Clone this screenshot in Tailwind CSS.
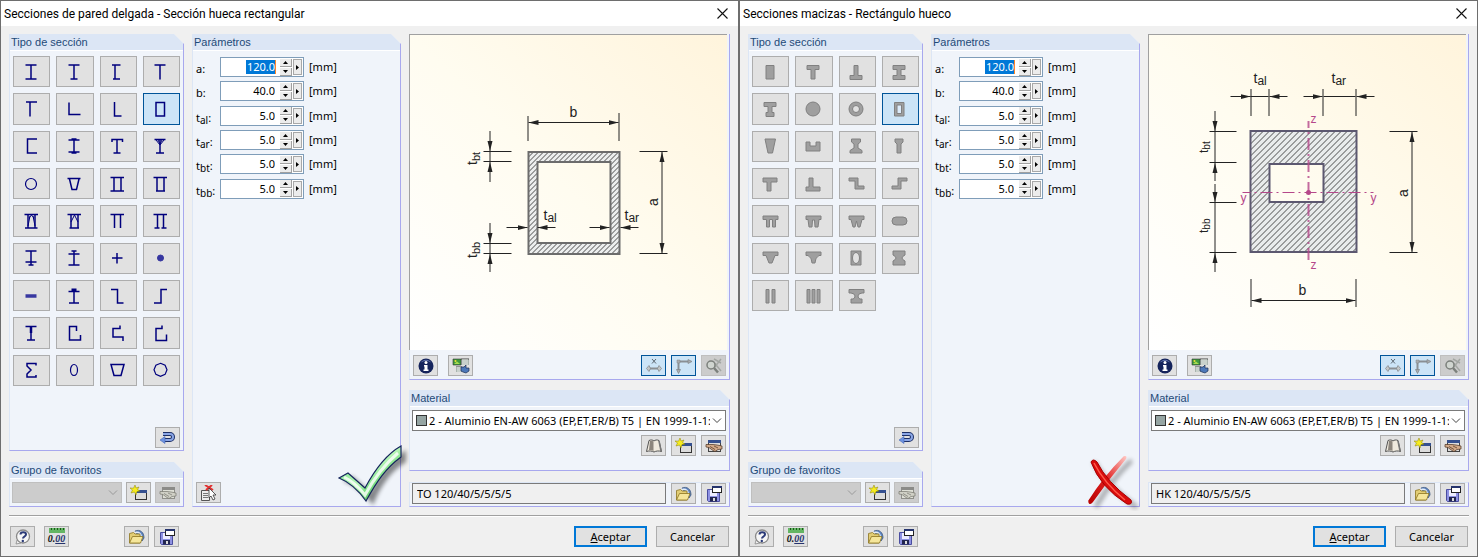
<!DOCTYPE html>
<html lang="es">
<head>
  <meta charset="UTF-8" />
  <meta name="viewport" content="width=device-width, initial-scale=1" />
  <title>Secciones</title>
  <script src="https://cdn.jsdelivr.net/npm/@tailwindcss/browser@4"></script>
</head>
<body class="bg-[#f0f0f0] font-['Noto_Sans',sans-serif] text-[11px] leading-4 text-black">

  <!-- Shared toolbar icons -->
  <svg class="absolute size-0" aria-hidden="true">
    <defs>
      <pattern id="hatch5" width="5" height="5" patternUnits="userSpaceOnUse">
        <rect width="5" height="5" fill="#eceeee" />
        <path d="M-1 1l2-2M0 5l5-5M4 6l2-2" stroke="#222" stroke-width="0.800" />
      </pattern>
      <pattern id="hatch6" width="6" height="6" patternUnits="userSpaceOnUse">
        <rect width="6" height="6" fill="#e9ecec" />
        <path d="M-1 1l2-2M0 6l6-6M5 7l2-2" stroke="#222" stroke-width="0.800" />
      </pattern>
      <linearGradient id="tick" x1="0" y1="0" x2="1" y2="1">
        <stop offset="0" stop-color="#5fe07a" />
        <stop offset="0.5" stop-color="#b8f7b8" />
        <stop offset="0.62" stop-color="#7be083" />
        <stop offset="1" stop-color="#1d7a2c" />
      </linearGradient>
      <linearGradient id="cross" x1="0" y1="1" x2="1" y2="0">
        <stop offset="0" stop-color="#b80000" />
        <stop offset="0.5" stop-color="#e02020" />
        <stop offset="1" stop-color="#ffc4c0" />
      </linearGradient>
      <filter id="soft" x="-20%" y="-20%" width="150%" height="150%">
        <feGaussianBlur stdDeviation="2" />
      </filter>
      <marker id="arrow" viewBox="0 0 10 6" refX="10" refY="3" markerWidth="10" markerHeight="6" markerUnits="userSpaceOnUse" orient="auto-start-reverse">
        <path d="M0 0.500L10 3L0 5.500z" fill="#222" />
      </marker>
    </defs>
    <symbol id="i-undo" viewBox="0 0 18 16">
      <path d="M4 4h7a2.500 2.500 0 010 6H4" fill="none" stroke="#1c2f66" stroke-width="4" />
      <path d="M4 4h7a2.500 2.500 0 010 6H4" fill="none" stroke="#8aa6e6" stroke-width="2" />
      <path d="M1 10l5-3.500v7z" fill="#6d92e0" stroke="#4468b8" stroke-width="0.600" />
    </symbol>
    <symbol id="i-new" viewBox="0 0 18 16">
      <rect x="5.500" y="5.500" width="11" height="9" fill="#dcdcdc" stroke="#333" />
      <path d="M5 5h12v3H5z" fill="#35508f" />
      <path d="M5 0l1 3 3-1-1.500 2.500L10 6l-3 .5L6 10l-1.500-3L1 8l1.500-3L0 3l3.500.2z" fill="#f6ec1e" stroke="#8a8200" stroke-width="0.500" />
    </symbol>
    <symbol id="i-edit" viewBox="0 0 18 16">
      <rect x="3.500" y="2.500" width="12" height="11" fill="#dcdcdc" stroke="#444" />
      <path d="M3 2h13v3H3z" fill="#35508f" />
      <path d="M1 6.500h7l4 .5 5 1v3l-4 .5-3 2-2-1-4-3-3-.5z" fill="#d2a988" stroke="#4a3020" stroke-width="0.700" />
      <path d="M5 8.500l5 3M9 8l4 2" stroke="#4a3020" stroke-width="0.700" />
    </symbol>
    <symbol id="i-edit-off" viewBox="0 0 18 16">
      <rect x="3.500" y="2.500" width="12" height="11" fill="#dedfd6" stroke="#8f8f8a" />
      <path d="M3 2h13v3H3z" fill="#8b8b88" />
      <path d="M1 6.500h7l4 .5 5 1v3l-4 .5-3 2-2-1-4-3-3-.5z" fill="#d0d0c6" stroke="#77776e" stroke-width="0.700" />
      <path d="M5 8.500l5 3M9 8l4 2" stroke="#77776e" stroke-width="0.700" />
    </symbol>
    <symbol id="i-help" viewBox="0 0 18 16">
      <path d="M3 11l-1 4 5-1z" fill="#eee" stroke="#8a8a8a" stroke-width="0.800" />
      <circle cx="9" cy="7.500" r="6.500" fill="#f6f6f6" stroke="#8a8a8a" stroke-width="1.300" />
      <path d="M6.500 5.500c0-3 5.500-3 5.500 0 0 2-3 2-3 4" fill="none" stroke="#2b3a78" stroke-width="2" />
      <circle cx="8.800" cy="12" r="1.200" fill="#2b3a78" />
    </symbol>
    <symbol id="i-open" viewBox="0 0 18 16">
      <path d="M7 2c5-2 9 1 9 7l-2 3z" fill="#5f86c0" stroke="#3a5680" stroke-width="0.800" />
      <path d="M7 3.500c4-1 6.500 1 6.500 6" fill="none" stroke="#e6eefa" stroke-width="1.500" />
      <path d="M1.500 14V4.500l4-1 1.500 1.500h5V14z" fill="#e2cd75" stroke="#8b7420" stroke-width="0.800" />
      <path d="M1.500 14l3-6.500H15L12.500 14z" fill="#f5e69a" stroke="#8b7420" stroke-width="0.800" />
    </symbol>
    <symbol id="i-save" viewBox="0 0 18 16">
      <path d="M2.500 3.500h12v12h-11l-1-1z" fill="#8f92e2" stroke="#4a4da0" />
      <path d="M5 4h7v6H5z" fill="#eef" />
      <path d="M5 11h7v4.500H5z" fill="#222650" />
      <path d="M8 12h2v3H8z" fill="#ddd" />
      <rect x="7.500" y="0.500" width="9" height="6" fill="#fff" stroke="#222" />
      <path d="M7 0h10v2H7z" fill="#26346e" />
    </symbol>
    <symbol id="i-info" viewBox="0 0 18 16">
      <circle cx="9" cy="8" r="7.500" fill="#15245c" />
      <path d="M4 4.500a6 6 0 0110 0 9 9 0 00-10 0z" fill="#6577b0" />
      <circle cx="9" cy="4.500" r="1.500" fill="#fff" />
      <path d="M7 7h3.500v4.500h1V13H6.500v-1.500h1V8.500H7z" fill="#fff" />
    </symbol>
    <symbol id="i-image" viewBox="0 0 18 16">
      <path d="M1 1h16v6H1z" fill="#a9b4ae" />
      <path d="M1 1h8v6H1z" fill="#3f9a3f" stroke="#333" stroke-width="0.600" />
      <path d="M2 6l3-2.500L8 6z" fill="#a6dc50" />
      <circle cx="3.500" cy="3" r="1" fill="#f2e030" />
      <path d="M9 1h8M4 9h6" stroke="#444" />
      <path d="M4 9h6v5H4z" fill="#a9b4ae" />
      <path d="M11 1v6M13 1v6M15 1v6M6 9v5M8 9v5" stroke="#e9eeea" />
      <path d="M9 9h3l2-2v3h3v3l-3 2-3-1-2-1z" fill="#4d78b8" stroke="#1c2f55" stroke-width="0.700" />
    </symbol>
    <symbol id="i-dimx" viewBox="0 0 18 16">
      <path d="M7 1l4 4.500M11 1L7 5.500" stroke="#5c6670" stroke-width="1" />
      <path d="M3 10.500h12" stroke="#8b8f93" stroke-width="2" />
      <path d="M1.500 10.500l2.500-3 1.500 3-1.500 3zM16.500 10.500l-2.500-3-1.500 3 1.500 3z" fill="#c2c6c8" stroke="#808488" stroke-width="0.700" />
    </symbol>
    <symbol id="i-axes" viewBox="0 0 18 16">
      <path d="M3.500 13V3.500h11" fill="none" stroke="#8a8f94" stroke-width="2" />
      <path d="M2 2h3v3H2z" fill="#a9adb0" stroke="#808488" stroke-width="0.500" />
      <path d="M17 3.500l-4-2v4zM3.500 15.500l-2-4h4z" fill="#a9adb0" stroke="#808488" stroke-width="0.700" />
    </symbol>
    <symbol id="i-zoomoff" viewBox="0 0 18 16">
      <path d="M8 3l8 10M16 1L9 10M9 1l7 4" stroke="#a3a7a3" stroke-width="1.500" />
      <circle cx="6" cy="7" r="4" fill="#d0d5d0" stroke="#7c807c" stroke-width="1.500" />
      <path d="M9 10l4 4.500" stroke="#7c807c" stroke-width="2.500" />
    </symbol>
    <symbol id="i-book" viewBox="0 0 18 16">
      <path d="M1.500 13.500L4 2.500c2-1 4-.5 5 .5 1-1 3-1.500 5-.5l2.500 11c-3-1-5.500-.5-7.500.5-2-1-4.500-1.500-7.500-.5z" fill="#efe9dd" stroke="#444" stroke-width="0.900" />
      <path d="M5 3l-1 9c2 0 3 .3 4.500 1V3.500C7.500 2.800 6 2.500 5 3z" fill="#8c857c" />
      <path d="M14 3l2 10" stroke="#777" stroke-width="1.500" />
    </symbol>
    <symbol id="i-pick" viewBox="0 0 18 16">
      <path d="M1.500 5.500h8v10h-8z" fill="#eee" stroke="#555" />
      <path d="M3 8.500h5M3 10.500h5M3 12.500h5" stroke="#777" />
      <path d="M5 0l8 5M12 0L6 5" stroke="#e03030" stroke-width="2" />
      <path d="M9 3v10l2-2 2 4 2-1-2-4h3z" fill="#fff" stroke="#333" stroke-width="0.800" />
    </symbol>
  </svg>

  <main id="dialogs" class="flex"></main>

  <script>
    // Section glyphs, all on an 18x18 grid
    const thinIcons = [
      '<path d="M3.500 2h11M3.500 16h11M9 2v14"/>',
      '<path d="M3.500 2h11M5.500 16h7M9 2v14"/>',
      '<path d="M4 2h8.500M5 16h7M7 2v14"/>',
      '<path d="M3.500 2h11M9 2v14.500"/>',
      '<path d="M4 2h11M8 2v14.500"/>',
      '<path d="M4 2.500V14.500h11.500"/>',
      '<path d="M6.500 2v14h7"/>',
      '<path d="M5 2.500h8.500v13.500H5z"/>',
      '<path d="M15 2H5.500v14H15"/>',
      '<path d="M3.500 3h11M3.500 15h11M9 2v14M6.500 2h5M6.500 16h5"/>',
      '<path d="M4 5V2.500h10.500V5M9 2v14M5.500 16h7"/>',
      '<path d="M3.500 2.500h11M9 2v14M5 16h8"/><path d="M5 3l4 5 4-5M7 3l2 4 2-4" stroke-width="1"/>',
      '<circle cx="9" cy="9" r="5.500" stroke-width="1.200"/>',
      '<path d="M2.500 3.500h13M4.500 4l2.500 10.500h4.500L14 4"/>',
      '<path d="M2.500 2.500h13.500M2.500 16h13.500M6 2v14M13 2v14"/>',
      '<path d="M2.500 2.500h13.500M5 16h9M6 2v14M13 2v14"/>',
      '<path d="M2.500 2.500h13.500M3 16h12.500M6 2v14M13 2v14"/><path d="M6 14l2-10M13 14L11 4M7 6l2.500-3L12 6" stroke-width="1"/>',
      '<path d="M2.500 2.500h13.500M4.500 16h9.500M6 2v14M13 2v14"/><path d="M6 10l3.500-7L13 10" stroke-width="1"/>',
      '<path d="M2.500 2.500h13.500M6.500 2v14M12.500 2v14"/>',
      '<path d="M2.500 2.500h13.500M6.500 2v14M12.500 2v14M3.500 16h5M10.500 16h5"/>',
      '<path d="M3.500 2h11M3.500 13h11M9 2v14M6.500 16h5"/>',
      '<path d="M3.500 5h11M3.500 16h11M9 2v14M6.500 2h5"/>',
      '<path d="M4 9h10.500M9 4v10.500"/>',
      '<circle cx="9.500" cy="9" r="3" fill="#3636a0" stroke="#3636a0" stroke-width="1"/>',
      '<path d="M3.500 9h11" stroke="#3838a0" stroke-width="3.500"/>',
      '<path d="M3.500 4.500h11M4 16h10M9 2v14"/><path d="M6.500 3h5" stroke-width="3"/>',
      '<path d="M3 2.500h6.500v13.500h6"/>',
      '<path d="M16 2.500h-6v13.500H3"/>',
      '<path d="M3.500 2.500h11M5 16h8M9 8v8"/><path d="M9 2v7" stroke-width="2.500"/>',
      '<path d="M11.500 7V2.500H4.500v13.500h11v-5"/>',
      '<path d="M12 1.500V4.500H5v8.500h10v4"/>',
      '<path d="M11 1.500V4.500H5v12h10.500v-6"/>',
      '<path d="M14 4.500V2.500H5v2.500l4 4-4 4v3h9v-2"/>',
      '<ellipse cx="9" cy="9" rx="3.500" ry="5.500" stroke-width="1.200"/>',
      '<path d="M3 3.500h13l-3 11H6z"/>',
      '<path d="M9.500 2.300l4.600 1.900 1.900 4.600-1.900 4.600-4.600 1.900-4.600-1.900L3 8.800l1.900-4.600z" stroke-width="1.200"/>'
    ];

    const solidIcons = [
      '<path d="M5 2.500h8v13.500H5z"/>',
      '<path d="M3 2.500h12v4h-4v9.500H7V6.500H3z"/>',
      '<path d="M7 2.500h4v10h4v4H3v-4h4z"/>',
      '<path d="M3 2.500h12v4h-4v6h4v4H3v-4h4v-6H3z"/>',
      '<path d="M3 2.500h12v4h-4v6h2v4H5v-4h2v-6H3z"/>',
      '<circle cx="9" cy="9" r="7"/>',
      '<circle cx="9" cy="9" r="7"/><circle cx="9" cy="9" r="3.500" fill="#e1e1e1"/>',
      '<path d="M4.500 2.500h9.500v13.500H4.500z"/><path d="M7 5h4.500v8.500H7z" fill="#dcebfa"/>',
      '<path d="M4 2h10.500l-3 14H7z"/>',
      '<path d="M2 5h4v4h6V5h4v9H2z"/>',
      '<path d="M4.500 2h9v3l-2.500 2v4l4 2.500v2.500H3v-2.500l4-2.500V7L4.500 5z"/>',
      '<path d="M5 2h8v3l-2 2v9H7V7L5 5z"/>',
      '<path d="M2 3h14v4h-6v9H6V7H2z"/>',
      '<path d="M5 3h4v9h7v4H2v-4h3z"/>',
      '<path d="M2 3h9v8h6v3H8V6H2z"/>',
      '<path d="M17 3H8v8H2v3h9V6h6z"/>',
      '<path d="M2 4h15v3.500h-2.500V15h-3V7.500h-3V15h-3V7.500H2z"/>',
      '<path d="M2 4h15v3.500h-2L14 15h-3L10.500 8h-2L8 15H5L4 7.500H2z"/>',
      '<path d="M2 4h15v3.500h-2L13 15h-2L9.500 9 8 15H6L4 7.500H2z"/>',
      '<rect x="2" y="5" width="15" height="8" rx="4"/>',
      '<path d="M2 3h15v3.500h-3L11 14H8L5 6.500H2z"/>',
      '<path d="M2 3h15v3.500h-2q-4 2-4 7.500H8q0-5.500-4-7.500H2z"/>',
      '<path d="M4 2h10v14H4z"/><ellipse cx="9" cy="9" rx="3.500" ry="5.500" fill="#e1e1e1"/>',
      '<path d="M3 2h12v4q-6 3 0 6v4H3v-4q6-3 0-6z"/>',
      '<path d="M5 2.500h3v13.500H5zM11 2.500h3v13.500h-3z"/>',
      '<path d="M3 2.500h3v13.500H3zM8 2.500h3v13.500H8zM13 2.500h3v13.500h-3z"/>',
      '<path d="M2 2.500h15v3.500h-2q-4 .5-4 3t2 3h2v4H4v-4h2q2-.5 2-3T4 6H2z"/>'
    ];

    const thinDrawing = `
      <path d="M118 117h91v102h-91zM127 127v81h73v-81z" fill="url(#hatch5)" fill-rule="evenodd" stroke="#6c6c6c" stroke-width="2"/>
      <g fill="none" stroke="#222" stroke-width="1">
        <path d="M117.500 81v25M208.500 78v28M229 116.500h28M229 218.500h28M73 116.500h28M73 126.500h28M73 208.500h28M73 218.500h28M79.500 116v10M79.500 208v10"/>
        <path d="M118 87.500H208" marker-start="url(#arrow)" marker-end="url(#arrow)"/>
        <path d="M251.500 117V218" marker-start="url(#arrow)" marker-end="url(#arrow)"/>
        <path d="M79.500 96V116" marker-end="url(#arrow)"/><path d="M79.500 147V127" marker-end="url(#arrow)"/>
        <path d="M79.500 188V208" marker-end="url(#arrow)"/><path d="M79.500 237V219" marker-end="url(#arrow)"/>
        <path d="M96 192.500H117" marker-end="url(#arrow)"/><path d="M145 192.500H127" marker-end="url(#arrow)"/>
        <path d="M179 192.500H199" marker-end="url(#arrow)"/><path d="M228 192.500H210" marker-end="url(#arrow)"/>
      </g>
      <g font-size="14" fill="#222">
        <text x="159" y="82">b</text>
        <text transform="translate(247 171) rotate(-90)">a</text>
        <text x="133" y="185">t<tspan dy="2" font-size="12">al</tspan></text>
        <text x="214" y="185">t<tspan dy="2" font-size="12">ar</tspan></text>
        <text transform="translate(66 130) rotate(-90)">t<tspan dy="3" font-size="11">bt</tspan></text>
        <text transform="translate(66 223) rotate(-90)">t<tspan dy="3" font-size="11">bb</tspan></text>
      </g>`;

    const solidDrawing = `
      <path d="M101 96h106v121h-106zM120 129v38h54v-38z" fill="url(#hatch6)" fill-rule="evenodd" stroke="#5c5870" stroke-width="2"/>
      <g fill="none" stroke="#222" stroke-width="1">
        <path d="M101.500 54v27M119.500 54v27M173.500 54v27M206.500 54v27M101 61.500h18M174 61.500h32"/>
        <path d="M60 96.500h27M60 127.500h27M60 167.500h27M60 217.500h27M65.500 96v32M65.500 167v50M240 96.500h28M240 217.500h28M101.500 244v28M206.500 244v28"/>
        <path d="M81 61.500H101" marker-end="url(#arrow)"/><path d="M138 61.500H120" marker-end="url(#arrow)"/>
        <path d="M154 61.500H173" marker-end="url(#arrow)"/><path d="M225 61.500H207" marker-end="url(#arrow)"/>
        <path d="M65.500 76V96" marker-end="url(#arrow)"/><path d="M65.500 146V128" marker-end="url(#arrow)"/>
        <path d="M65.500 149V167" marker-end="url(#arrow)"/><path d="M65.500 237V218" marker-end="url(#arrow)"/>
        <path d="M262.500 97V217" marker-start="url(#arrow)" marker-end="url(#arrow)"/>
        <path d="M102 265.500H206" marker-start="url(#arrow)" marker-end="url(#arrow)"/>
      </g>
      <g stroke="#b5478a" fill="#b5478a" stroke-dasharray="12 4 2 4">
        <path d="M159 86V228" stroke-width="2" stroke-dashoffset="5" opacity="0.800"/>
        <path d="M93 157.500H224" stroke-width="1" stroke-dashoffset="4"/>
      </g>
      <circle cx="159" cy="157.500" r="2.500" fill="#b5478a"/>
      <g font-size="12" fill="#b5478a">
        <text x="161" y="88">z</text><text x="161" y="234">z</text>
        <text x="91" y="167">y</text><text x="221" y="167">y</text>
      </g>
      <g font-size="14" fill="#222">
        <text x="149" y="260">b</text>
        <text transform="translate(258 162) rotate(-90)">a</text>
        <text x="104" y="48">t<tspan dy="2" font-size="12">al</tspan></text>
        <text x="182" y="48">t<tspan dy="2" font-size="12">ar</tspan></text>
        <text font-size="12" transform="translate(58 118) rotate(-90)">t<tspan dy="2" font-size="10">bt</tspan></text>
        <text font-size="12" transform="translate(58 198) rotate(-90)">t<tspan dy="2" font-size="10">bb</tspan></text>
      </g>`;

    const tick = `
      <svg class="pointer-events-none absolute -right-2 bottom-0 h-[64px] w-[74px]" viewBox="0 0 74 64" aria-hidden="true">
        <path d="M8 38l9-5 18 16C44 32 56 16 71 7v12C56 28 46 42 38 62 30 52 20 42 8 38z" fill="#000" opacity="0.450" filter="url(#soft)"/>
        <path d="M4 35l9-5 17 15C38 30 50 12 66 3v11C51 25 42 38 31 58 24 48 14 39 4 35z" fill="url(#tick)" stroke="#14235c" stroke-width="1.200"/>
        <path d="M9 34q12 6 21 18 14-26 33-42" fill="none" stroke="#fff" stroke-width="3" opacity="0.800"/>
      </svg>`;

    const cross = `
      <svg class="pointer-events-none absolute right-0 -bottom-1 h-[58px] w-[54px]" viewBox="0 0 54 58" aria-hidden="true">
        <path d="M9 11q14 24 40 42M44 9Q26 26 11 52" fill="none" stroke="#000" stroke-width="5" stroke-linecap="round" opacity="0.300" filter="url(#soft)"/>
        <path d="M38 4q3-1 1 2Q22 26 6 49q-3 3-3-1Q18 24 38 4z" fill="url(#cross)" stroke="url(#cross)" stroke-width="1.500"/>
        <path d="M5 9q2-4 6 0 10 20 34 38 2 5-4 4Q14 34 5 9z" fill="#d80c0c" stroke="#a80000" stroke-width="1"/>
        <path d="M8 10q10 20 31 37" fill="none" stroke="#ff5a4a" stroke-width="1.500"/>
      </svg>`;

    const params = [
      ['a', '', '120.0'], ['b', '', '40.0'], ['t', 'al', '5.0'],
      ['t', 'ar', '5.0'], ['t', 'bt', '5.0'], ['t', 'bb', '5.0']
    ];

    const chevron = '<svg class="pointer-events-none absolute top-[7px] right-1 h-2 w-2.5" viewBox="0 0 10 8" fill="none" stroke="currentColor"><path d="M1 1.500l4 4 4-4"/></svg>';

    function toolButton(icon, label) {
      return `<button type="button" aria-label="${label}" class="flex h-[21px] w-[25px] items-center justify-center border border-[#adadad] bg-[#e1e1e1]"><svg class="h-4 w-[18px]"><use href="#${icon}"/></svg></button>`;
    }

    function activeButton(icon, label) {
      return `<button type="button" aria-label="${label}" aria-pressed="true" class="flex h-[21px] w-[25px] items-center justify-center border border-[#005499] bg-[#cce4f7]"><svg class="h-4 w-[18px]"><use href="#${icon}"/></svg></button>`;
    }

    function disabledButton(icon, label) {
      return `<button type="button" disabled aria-label="${label}" class="flex h-[21px] w-[25px] items-center justify-center border border-[#bfbfbf] bg-[#cccccc]"><svg class="h-4 w-[18px]"><use href="#${icon}"/></svg></button>`;
    }

    // green ruler over the decimal places
    function unitsButton() {
      return `
        <button type="button" aria-label="Unidades" class="ml-[9px] flex h-[21px] w-[25px] flex-col items-center border border-[#adadad] bg-[#e1e1e1] pt-px">
          <svg class="h-[5px] w-4" viewBox="0 0 16 5"><path d="M0 0h16v5H0z" fill="#63b563"/><path d="M2.500 0v2M5.500 0v2M8.500 0v2M11.500 0v2M14.500 0v2" stroke="#1c5a1c"/></svg>
          <span class="font-['Liberation_Serif',serif] text-[10px] leading-3 font-bold text-[#111] italic">0.<u class="text-[#26346e]">00</u></span>
        </button>`;
    }

    function panelTitle(text) {
      return `<h2 class="h-[17px] border-b border-white bg-[#dce6f5] pl-px font-['Liberation_Sans',Arial,sans-serif] text-[#1e4a78]">${text}</h2>`;
    }

    function typeButton(icon, i, selected, solid) {
      const box = i === selected ? 'border-[#005499] bg-[#cce4f7]' : 'border-[#adadad] bg-[#e1e1e1]';
      const ink = solid
        ? 'fill="#9f9f9f" stroke="#808080" stroke-width="1"'
        : 'fill="none" stroke="#00007d" stroke-width="1.500"';
      return `<button type="button" aria-label="Sección ${i + 1}" class="flex items-center justify-center border pr-0.5 ${box}"><svg class="size-[18px]" viewBox="0 0 18 18" ${ink}>${icon}</svg></button>`;
    }

    function paramRow(id, [name, sub, value], i) {
      // the first field holds the current text selection
      const input = i === 0
        ? 'h-3.5 w-[30px] bg-[#0078d7] text-white border-r border-[#ff8728]'
        : 'h-4 w-12 bg-white pr-px';
      return `
        <div class="flex items-center">
          <label for="${id}-p${i}" class="w-6 pt-1">${name}<span class="relative top-0.5 text-[10px]">${sub}</span>:</label>
          <div class="flex h-5 w-[84px] items-center justify-end border border-[#7f9db9] bg-white">
            <input id="${id}-p${i}" type="text" value="${value}" class="${input} mr-1 text-right outline-none" />
            <div class="mr-px flex flex-col">
              <button type="button" aria-label="Aumentar" class="flex h-2 w-3 items-center justify-center border-r border-b border-[#a0a0a0] bg-[#ececec]"><svg class="h-[3px] w-[5px]" viewBox="0 0 5 3"><path d="M0 3L2.500 0L5 3z"/></svg></button>
              <button type="button" aria-label="Reducir" class="mt-px flex h-2 w-3 items-center justify-center border-r border-b border-[#a0a0a0] bg-[#ececec]"><svg class="h-[3px] w-[5px]" viewBox="0 0 5 3"><path d="M0 0L2.500 3L5 0z"/></svg></button>
            </div>
            <button type="button" aria-label="Más" class="mr-px flex h-4 w-[9px] items-center justify-center border border-[#a8a8a8] bg-[#ececec]"><svg class="h-[5px] w-[3px]" viewBox="0 0 3 5"><path d="M0 0L3 2.500L0 5z"/></svg></button>
          </div>
          <span class="ml-[5px]">[mm]</span>
        </div>`;
    }

    function dialog(d) {
      const clip = '[clip-path:polygon(0_0,calc(100%-10px)_0,100%_10px,100%_100%,0_100%)]';
      const panel = `flex flex-col border-r border-b border-l border-r-[#a8a8ee] border-b-[#a8a8ee] border-l-[#dce6f5] bg-[#f0f4fa] ${clip}`;
      return `
      <section class="min-w-[700px] flex-1 border border-[#6e6e6e]">
        <header class="flex h-[25px] items-center justify-between bg-white pr-2.5 pl-[3px]">
          <h1 class="font-[Roboto,'Noto_Sans',sans-serif] text-[12px]">${d.title}</h1>
          <button type="button" aria-label="Cerrar"><svg class="size-[11px]" viewBox="0 0 11 11" stroke="#111" stroke-width="1.100"><path d="M0.500 0.500l10 10M10.500 0.500l-10 10"/></svg></button>
        </header>

        <div class="grid grid-cols-[175px_209px_1fr] gap-2 px-2 pt-2">
          <div class="flex flex-col gap-[11px]">
            <div class="flex-1 ${panel}">
              ${panelTitle('Tipo de sección')}
              <div class="grid h-[335px] grid-cols-4 grid-rows-9 gap-1.5 px-[3px] pt-[5px]">
                ${d.icons.map((icon, i) => typeButton(icon, i, 7, d.solid)).join('')}
              </div>
              <div class="mt-auto flex justify-end pr-[3px] pb-0.5">${toolButton('i-undo', 'Restablecer')}</div>
            </div>
            <div class="${panel}">
              ${panelTitle('Grupo de favoritos')}
              <div class="flex gap-1 py-[3px] pr-[3px] pl-0.5">
                <div class="relative flex-1 text-[#9a9a9a]">
                  <select disabled aria-label="Grupo de favoritos" class="block h-[21px] w-full appearance-none border border-[#bfbfbf] bg-[#cccccc]"></select>
                  ${chevron}
                </div>
                ${toolButton('i-new', 'Nuevo grupo')}
                ${disabledButton('i-edit-off', 'Editar grupo')}
              </div>
            </div>
          </div>

          <div class="relative flex flex-col">
            <div class="flex-1 ${panel}">
              ${panelTitle('Parámetros')}
              <div class="grid h-[148px] grid-rows-6 gap-1 pt-1.5 pl-[3px]">
                ${params.map((p, i) => paramRow(d.id, p, i)).join('')}
              </div>
              <div class="mt-auto pb-[3px] pl-[3px]">${d.solid ? '' : toolButton('i-pick', 'Elegir')}</div>
            </div>
            ${d.mark}
          </div>

          <div class="flex flex-col">
            <div class="border-r border-b border-l border-[#a8a8ee] border-l-[#dce6f5] bg-[#f0f4fa]">
              <div class="-ml-px mr-0.5 border-t border-l border-[#a0a0a0] bg-linear-to-tr from-white via-[#fffcf0] to-[#fff4dc]">
                <svg class="block h-[315px] w-full" viewBox="0 0 316 315" font-family="Liberation Sans, Arial, sans-serif">${d.drawing}</svg>
              </div>
              <div class="flex gap-[5px] pt-[5px] pr-[3px] pb-[3px] pl-[3px]">
                ${toolButton('i-info', 'Información')}
                <div class="mr-auto ml-[5px]">${toolButton('i-image', 'Imagen')}</div>
                ${activeButton('i-dimx', 'Acotaciones')}
                ${activeButton('i-axes', 'Ejes')}
                ${disabledButton('i-zoomoff', 'Restablecer vista')}
              </div>
            </div>

            <div class="mt-2.5 ${panel}">
              ${panelTitle('Material')}
              <div class="pt-[3px] pr-[3px] pb-3.5 pl-0.5">
                <div class="relative text-[#444]">
                  <select aria-label="Material" class="block h-[21px] w-full appearance-none border border-[#7a7a7a] bg-white pr-[15px] pl-4 text-black">
                    <option>2 - Aluminio EN-AW 6063 (EP,ET,ER/B) T5 | EN 1999-1-1:2</option>
                  </select>
                  <span class="absolute top-[5px] left-1 size-[11px] border border-[#333] bg-[#96a5a3]"></span>
                  ${chevron}
                </div>
                <div class="mt-1 flex justify-end gap-[5px]">
                  ${toolButton('i-book', 'Biblioteca de materiales')}
                  ${toolButton('i-new', 'Nuevo material')}
                  ${toolButton('i-edit', 'Editar material')}
                </div>
              </div>
            </div>

            <div class="mt-[11px] flex items-start gap-[5px] border border-[#a8a8ee] border-t-[#dce6f5] border-l-[#dce6f5] bg-[#f0f4fa] pr-[3px] pb-0.5 pl-0.5">
              <input type="text" readonly aria-label="Designación" value="${d.code}" class="h-[21px] min-w-0 flex-1 border border-[#7a7a7a] bg-[#f0f0f0] pl-1 outline-none" />
              ${toolButton('i-open', 'Abrir')}
              ${toolButton('i-save', 'Guardar')}
            </div>
          </div>
        </div>

        <div class="mx-2 mt-2 h-0.5 border-t border-[#a0a0a0] bg-white"></div>

        <footer class="flex p-[9px]">
          ${toolButton('i-help', 'Ayuda')}
          ${unitsButton()}
          <div class="ml-[55px] flex gap-[5px]">
            ${toolButton('i-open', 'Abrir')}
            ${toolButton('i-save', 'Guardar')}
          </div>
          <button type="button" class="ml-auto h-[21px] w-[73px] border-2 border-[#0078d7] bg-[#e1e1e1] leading-4"><u>A</u>ceptar</button>
          <button type="button" class="ml-[9px] h-[21px] w-[73px] border border-[#adadad] bg-[#e1e1e1] leading-4">Cancelar</button>
        </footer>
      </section>`;
    }

    document.getElementById('dialogs').innerHTML = [
      { id: 'thin', title: 'Secciones de pared delgada - Sección hueca rectangular', icons: thinIcons, solid: false, drawing: thinDrawing, mark: tick, code: 'TO 120/40/5/5/5/5' },
      { id: 'solid', title: 'Secciones macizas - Rectángulo hueco', icons: solidIcons, solid: true, drawing: solidDrawing, mark: cross, code: 'HK 120/40/5/5/5/5' }
    ].map(dialog).join('');
  </script>
</body>
</html>
